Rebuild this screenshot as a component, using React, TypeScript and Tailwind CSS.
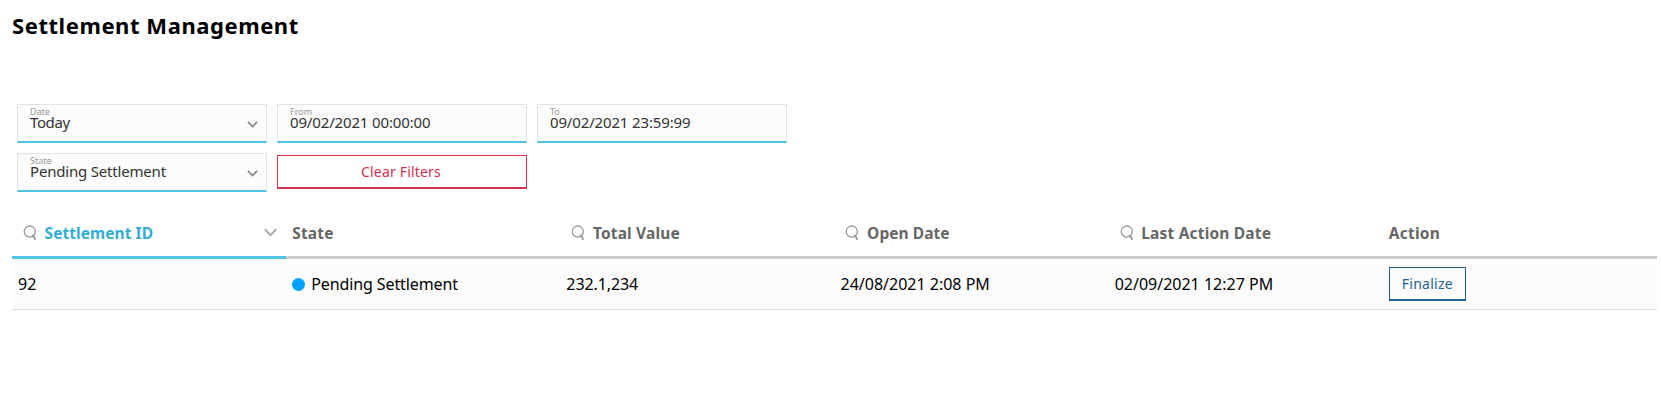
import React from "react";

function Chevron({ className }: { className: string }) {
  return (
    <svg viewBox="0 0 12 8" className={className} fill="none" stroke="currentColor" strokeWidth="1.9">
      <path d="M0.8 1 L6 6.4 L11.2 1" />
    </svg>
  );
}

function SearchIcon() {
  return (
    <svg viewBox="0 0 14 16" className="mt-px h-4 w-3.5 shrink-0 text-[#999999]" fill="none" stroke="currentColor">
      <circle cx="6.8" cy="6.6" r="5.6" strokeWidth="1.3" />
      <path d="M9 10 Q11.6 11.6 12 14.8" strokeWidth="1.8" />
    </svg>
  );
}

type FieldProps = { label: string; value: string; spacing: string; select?: boolean };

function Field({ label, value, spacing, select }: FieldProps) {
  return (
    <div className="flex h-[39px] w-[250px] items-center justify-between border border-b-2 border-[#e3e3e3] border-b-[#4fc4e4] bg-[#fcfcfc] pr-2 pl-3">
      <div className="flex h-full flex-col">
        <span className="mt-0.5 h-2.5 text-[9px] leading-[10px] text-[#999999]">{label}</span>
        <span className={`-mt-[5px] text-[15px] leading-5 text-[#333333] ${spacing}`}>{value}</span>
      </div>
      {select && <Chevron className="mt-0.5 h-[7px] w-[11px] text-[#868686]" />}
    </div>
  );
}

type HeaderProps = { title: string; search?: boolean; sorted?: boolean; spacing: string };

function HeaderCell({ title, search, sorted, spacing }: HeaderProps) {
  return (
    <div
      className={`flex h-[51px] items-center border-b-[3px] pr-2 ${search ? "gap-[7.6px] pl-[11px]" : "pl-1.5"} ${
        sorted ? "border-[#4fc4e4] text-[#33aed3]" : "border-[#cccccc] text-[#666666]"
      }`}
    >
      {search && <SearchIcon />}
      <span className={`mt-0.5 flex-1 text-[15.5px] leading-5 font-bold ${spacing}`}>{title}</span>
      {sorted && <Chevron className="mr-px h-[9px] w-[13px] text-[#a8a8a8]" />}
    </div>
  );
}

const columns: HeaderProps[] = [
  { title: "Settlement ID", search: true, sorted: true, spacing: "tracking-[0.06px]" },
  { title: "State", spacing: "tracking-[0.2px]" },
  { title: "Total Value", search: true, spacing: "tracking-[0.16px]" },
  { title: "Open Date", search: true, spacing: "tracking-[0.05px]" },
  { title: "Last Action Date", search: true, spacing: "tracking-[0.18px]" },
  { title: "Action", spacing: "tracking-[0.22px]" },
];

export default function App() {
  return (
    <main className="min-h-[405px] bg-white pr-1 pl-3 font-['Noto_Sans',sans-serif]">
      <h1 className="h-[104px] pt-[9px] text-[22px] leading-8 font-bold tracking-[0.56px] text-black">
        Settlement Management
      </h1>

      <section className="grid grid-cols-[repeat(3,250px)] gap-2.5 pl-[5px]">
        <Field label="Date" value="Today" spacing="tracking-[-0.4px]" select />
        <Field label="From" value="09/02/2021 00:00:00" spacing="tracking-[-0.15px]" />
        <Field label="To" value="09/02/2021 23:59:99" spacing="tracking-[-0.15px]" />
        <Field label="State" value="Pending Settlement" spacing="tracking-[-0.19px]" select />
        <button className="mt-0.5 h-[34px] border border-b-2 border-[#d2304f] bg-white pr-0.5 text-sm leading-5 tracking-[0.18px] text-[#d2304f]">
          Clear Filters
        </button>
      </section>

      <section className="mt-4">
        <div className="grid grid-cols-6">
          {columns.map((column) => (
            <HeaderCell key={column.title} {...column} />
          ))}
        </div>
        <div className="grid h-[51px] grid-cols-6 items-center border-b border-[#dedede] bg-[#fcfcfc] text-base text-black">
          <span className="pl-1.5">92</span>
          <span className="flex items-center gap-1.5 pl-1.5">
            <i className="size-[13px] rounded-full bg-[#00a3ff]" />
            <span className="tracking-[-0.1px]">Pending Settlement</span>
          </span>
          <span className="pl-1.5 tracking-[-0.1px]">232.1,234</span>
          <span className="pl-1.5">24/08/2021 2:08 PM</span>
          <span className="pl-1.5">02/09/2021 12:27 PM</span>
          <span className="pl-1.5">
            <button className="block h-[34px] w-[77px] border border-b-2 border-[#246192] text-sm leading-5 tracking-[0.25px] text-[#246192]">
              Finalize
            </button>
          </span>
        </div>
      </section>
    </main>
  );
}
